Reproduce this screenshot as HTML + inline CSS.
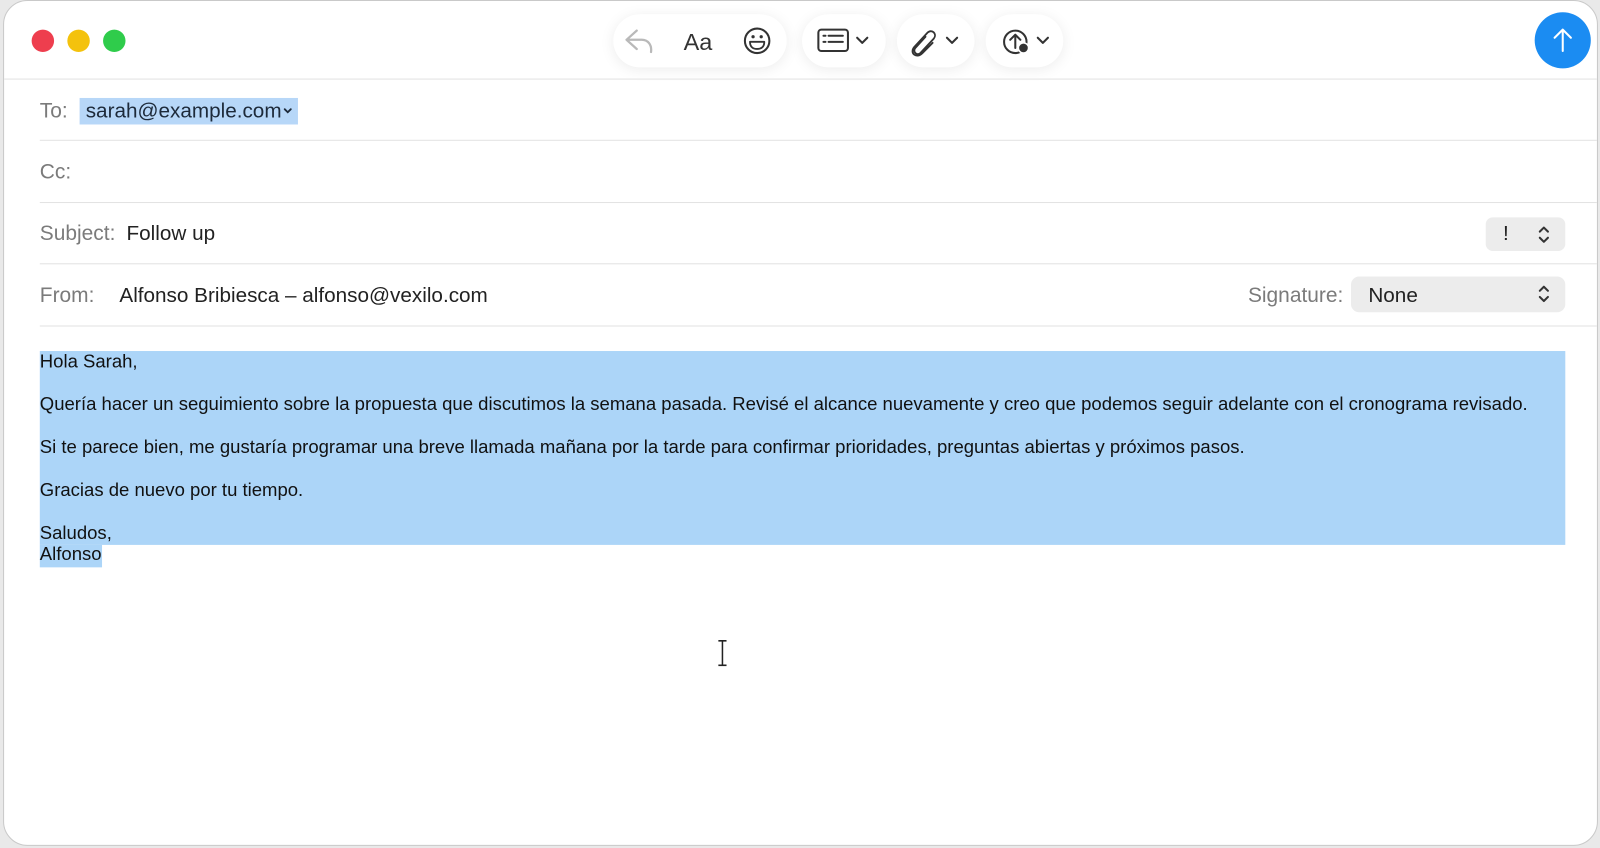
<!DOCTYPE html>
<html><head><meta charset="utf-8"><style>
*{margin:0;padding:0;box-sizing:border-box}
body{width:1600px;height:848px;background:#e9e9e9;position:relative;overflow:hidden;font-family:"Liberation Sans",Arial,sans-serif}
.wrap{position:absolute;left:0;top:0;width:1568px;height:831px;transform:scale(1.0204);transform-origin:0 0}
.win{position:absolute;left:3px;top:0;width:1563px;height:829px;background:#fff;border-radius:24px;border:1px solid #c9c9c9;overflow:hidden}
.abs{position:absolute}
.dot{position:absolute;top:28px;width:22px;height:22px;border-radius:50%}
.hr{position:absolute;left:35px;right:0;height:1px;background:#e2e2e2}
.lbl{position:absolute;font-size:20.5px;color:#7b7b7b;line-height:22px}
.val{position:absolute;font-size:20.3px;color:#222;line-height:22px}
.pill{position:absolute;top:13px;height:52px;background:#fff;border-radius:26px;box-shadow:0 2px 14px rgba(0,0,0,.08)}
.body{position:absolute;left:35px;font-size:18.15px;color:#111;line-height:21px}
</style></head><body><div class="wrap">
<div class="win">
<div class="dot" style="left:27px;background:#ee3e4e"></div>
<div class="dot" style="left:62px;background:#f4c20d"></div>
<div class="dot" style="left:97px;background:#2fcc4b"></div>

<div class="pill" style="left:597px;width:170px"></div>
<div class="pill" style="left:782px;width:82px"></div>
<div class="pill" style="left:875px;width:76px"></div>
<div class="pill" style="left:962px;width:76px"></div>
<svg class="abs" style="left:-3px;top:0" width="1100" height="80" fill="none" stroke-linecap="round" stroke-linejoin="round">
<path d="M623 29 L613 38 L623 47 M613 38 H628 C634 38 638 43 637 50" stroke="#b9b9b9" stroke-width="2.2"/>
<text x="669" y="48" font-family="Liberation Sans" font-size="23" fill="#333" stroke="none">Aa</text>
<circle cx="741" cy="39" r="12" stroke="#333" stroke-width="2"/>
<circle cx="737" cy="35" r="1.6" fill="#333" stroke="none"/><circle cx="745" cy="35" r="1.6" fill="#333" stroke="none"/>
<path d="M734 40 H748 C748 45 745 47 741 47 C737 47 734 45 734 40Z" stroke="#333" stroke-width="1.8"/>
<rect x="801" y="28" width="29" height="21" rx="3" stroke="#333" stroke-width="2"/>
<path d="M806 34 h2 M811 34 h14 M806 40 h2 M811 40 h14" stroke="#333" stroke-width="2"/>
<path d="M839 36 l5 5 l5 -5" stroke="#333" stroke-width="2"/>
<path d="M906 35 L896 46 C893 50 898 54 901 51 L914 37 C918 32 912 27 908 31 L895 45 C890 51 897 57 903 51 L913 41" stroke="#333" stroke-width="1.8"/>
<path d="M927 36 l5 5 l5 -5" stroke="#333" stroke-width="2"/>
<circle cx="994" cy="40" r="11" stroke="#333" stroke-width="2"/>
<path d="M994 46 V34 M989 38 l5 -5 l5 5" stroke="#333" stroke-width="2"/>
<circle cx="1002" cy="46" r="5" fill="#333" stroke="#fff" stroke-width="1.5"/>
<path d="M1016 36 l5 5 l5 -5" stroke="#333" stroke-width="2"/>
</svg>
<div class="abs" style="left:1500px;top:11px;width:55px;height:55px;border-radius:50%;background:#1b8cf2"></div>
<svg class="abs" style="left:1500px;top:11px" width="55" height="55" fill="none" stroke="#fff" stroke-width="2" stroke-linecap="round" stroke-linejoin="round"><path d="M27.5 38 V17 M19.5 25 L27.5 17 L35.5 25"/></svg>

<div class="abs" style="left:0;right:0;top:76px;height:1px;background:#e2e2e2"></div>
<div class="lbl" style="left:35px;top:97px">To:</div>
<div class="abs" style="left:74px;top:95px;width:214px;height:26px;background:#b7d7f8"></div>
<div class="val" style="left:80px;top:97px;color:#1d2a3a">sarah@example.com</div>
<svg class="abs" style="left:273px;top:104px" width="10" height="8" fill="none" stroke="#1d2a3a" stroke-width="1.8" stroke-linecap="round"><path d="M2 2 L5 5 L8 2"/></svg>
<div class="hr" style="top:136px"></div>
<div class="lbl" style="left:35px;top:157px">Cc:</div>
<div class="hr" style="top:197px"></div>
<div class="lbl" style="left:35px;top:217px">Subject:</div>
<div class="val" style="left:120px;top:217px">Follow up</div>
<div class="abs" style="left:1452px;top:212px;width:78px;height:33px;background:#ececec;border-radius:7px"></div>
<div class="val" style="left:1469px;top:217px">!</div>
<svg class="abs" style="left:1502px;top:219px" width="14" height="20" fill="none" stroke="#333" stroke-width="2" stroke-linecap="round" stroke-linejoin="round"><path d="M3 7 L7 3 L11 7 M3 13 L7 17 L11 13"/></svg>
<div class="hr" style="top:257px"></div>
<div class="lbl" style="left:35px;top:278px">From:</div>
<div class="val" style="left:113px;top:278px">Alfonso Bribiesca – alfonso@vexilo.com</div>
<div class="lbl" style="left:1219px;top:278px">Signature:</div>
<div class="abs" style="left:1320px;top:270px;width:210px;height:35px;background:#ececec;border-radius:8px"></div>
<div class="val" style="left:1337px;top:278px">None</div>
<svg class="abs" style="left:1502px;top:277px" width="14" height="20" fill="none" stroke="#333" stroke-width="2" stroke-linecap="round" stroke-linejoin="round"><path d="M3 7 L7 3 L11 7 M3 13 L7 17 L11 13"/></svg>
<div class="hr" style="top:318px"></div>

<div class="abs" style="left:35px;top:343px;width:1495px;height:190px;background:#acd5f8"></div>
<div class="abs" style="left:35px;top:533px;width:61px;height:22px;background:#acd5f8"></div>
<div class="body" style="top:343px">Hola Sarah,</div>
<div class="body" style="top:385px">Quería hacer un seguimiento sobre la propuesta que discutimos la semana pasada. Revisé el alcance nuevamente y creo que podemos seguir adelante con el cronograma revisado.</div>
<div class="body" style="top:427px">Si te parece bien, me gustaría programar una breve llamada mañana por la tarde para confirmar prioridades, preguntas abiertas y próximos pasos.</div>
<div class="body" style="top:469px">Gracias de nuevo por tu tiempo.</div>
<div class="body" style="top:511px">Saludos,<br>Alfonso</div>
<svg class="abs" style="left:698px;top:626px" width="12" height="26" fill="none" stroke="#222" stroke-width="1.5"><path d="M2 1 H10 M6 1 V25 M2 25 H10"/></svg>
</div>
</div></body></html>
